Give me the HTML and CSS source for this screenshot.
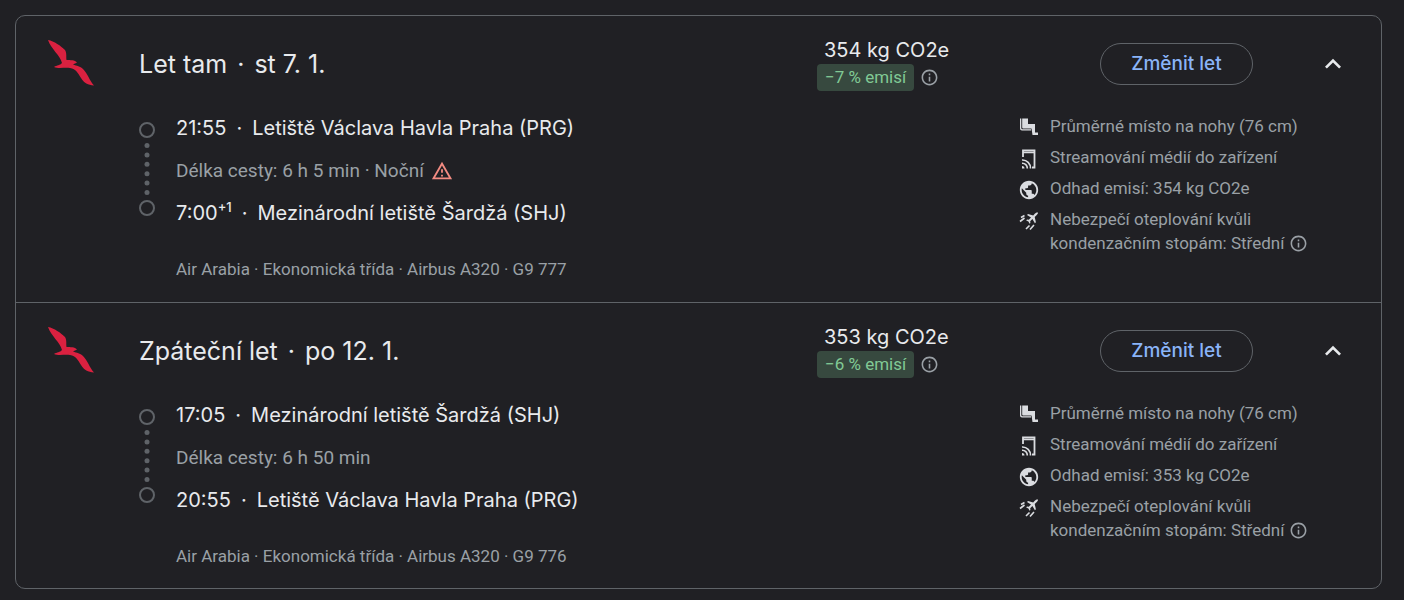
FILE: index.html
```html
<!DOCTYPE html>
<html lang="cs">
<head>
  <meta charset="UTF-8">
  <meta name="viewport" content="width=device-width, initial-scale=1">
  <title>Vybrané lety</title>
  <link rel="stylesheet" href="styles.css">
</head>
<body>
  <!-- shared icons -->
  <svg class="sprite" aria-hidden="true">
    <symbol id="bird" viewBox="0 0 46 46">
      <path d="M0 0C6 1 13 6 17 10C19 13 18 17 18.500 20C22 20 27 20 29 22.500C28 23.500 26 23.500 25 24.500C29 26 32 26 35 29C40 34 41 40 46 45.500C40 45 36 43 33 38C30 33 28 29 22 28C17 27 11 29 6 27C9 25 12 25.500 14 23C12 15 3 9 0 0z"/>
    </symbol>
    <symbol id="info" viewBox="0 0 24 24">
      <path d="M11 17h2v-6h-2v6zm1-15C6.480 2 2 6.480 2 12s4.480 10 10 10 10-4.480 10-10S17.520 2 12 2zm0 18c-4.410 0-8-3.590-8-8s3.590-8 8-8 8 3.590 8 8-3.590 8-8 8zM11 9h2V7h-2v2z"/>
    </symbol>
    <symbol id="warning" viewBox="0 0 24 24">
      <path d="M12 5.990L19.530 19H4.470L12 5.990M12 2L1 21h22L12 2zm1 14h-2v2h2v-2zm0-6h-2v4h2v-4z"/>
    </symbol>
    <symbol id="up" viewBox="0 0 24 24">
      <path d="M12 8l-6 6 1.410 1.410L12 10.830l4.590 4.580L18 14z"/>
    </symbol>
    <symbol id="route" viewBox="0 0 16 94">
      <circle cx="8" cy="8" r="7" fill="none" stroke="currentColor" stroke-width="2"/>
      <circle cx="8" cy="23.500" r="2.500"/>
      <circle cx="8" cy="33" r="2.500"/>
      <circle cx="8" cy="42.300" r="2.500"/>
      <circle cx="8" cy="51.700" r="2.500"/>
      <circle cx="8" cy="61" r="2.500"/>
      <circle cx="8" cy="70.500" r="2.500"/>
      <circle cx="8" cy="86" r="7" fill="none" stroke="currentColor" stroke-width="2"/>
    </symbol>
    <symbol id="seat" viewBox="0 0 20 20">
      <path d="M1 0.500h1.300V10q0 1.200 1.200 1.200H12v1.300H3Q1 12.500 1 10.500z"/>
      <path d="M3.200 0.500H9V6h7v8.500h3V17h-5.500l-1-6.500H4.200q-1 0-1-1z"/>
    </symbol>
    <symbol id="stream" viewBox="0 0 20 20">
      <g fill="none" stroke="currentColor">
        <path stroke-width="1.800" d="M4 8V1.500h11.500V18.500H13"/>
        <path stroke-width="1.600" d="M4 3.500h11.500M3 11a8 8 0 0 1 8.500 8.500M3 14.200a5 5 0 0 1 5.300 5.300"/>
      </g>
      <path d="M3 17a2.500 2.500 0 0 1 2.500 2.500H3z"/>
    </symbol>
    <symbol id="globe" viewBox="0 0 24 24">
      <path d="M12 1C5.930 1 1 5.930 1 12s4.930 11 11 11 11-4.930 11-11S18.070 1 12 1zm-1.100 19.720c-4.350-.540-7.700-4.230-7.700-8.720 0-.680.090-1.330.230-1.970L8.700 15.300v1.100c0 1.210.990 2.200 2.200 2.200v2.120zm7.590-2.790c-.290-.890-1.100-1.530-2.090-1.530h-1.100v-3.300c0-.600-.500-1.100-1.100-1.100H7.600V9.800h2.200c.600 0 1.100-.500 1.100-1.100V6.500h2.200c1.210 0 2.200-.990 2.200-2.200v-.450c3.220 1.310 5.500 4.460 5.500 8.150 0 2.290-.880 4.360-2.310 5.930z"/>
    </symbol>
    <symbol id="contrail" viewBox="0 0 20 20">
      <path d="M19 1.500c-1.200-.3-2.300.400-3 1.100L14.200 4.400 9 3 8 4l4 2.600-2.200 2.200-1.800-.200-.8.800 2.200 1.200 1.200 2.200.8-.8-.200-1.800 2.200-2.200 2.500 4.200 1-1L15.700 6l1.800-1.800c.800-.8 1.600-1.600 1.500-2.700z"/>
      <path fill="none" stroke="currentColor" stroke-width="1.600" d="M2 6.500l3.500-2M1 10.500l4.500-3.500M7 18l3.500-3.500M11 18.500l4-4.500"/>
    </symbol>
  </svg>

  <main class="flights">
    <section class="flight">
      <header class="flight-header">
        <svg class="logo"><use href="#bird"/></svg>
        <h2 class="title">Let tam<span class="dot">·</span>st 7. 1.</h2>
        <div class="emissions">
          <div class="amount">354 kg CO2e</div>
          <div class="compare">
            <span class="badge">−7 % emisí</span>
            <svg class="info"><use href="#info"/></svg>
          </div>
        </div>
        <button class="change" type="button">Změnit let</button>
        <button class="toggle" type="button" aria-label="Sbalit"><svg><use href="#up"/></svg></button>
      </header>
      <div class="flight-body">
        <svg class="route"><use href="#route"/></svg>
        <div class="legs">
          <div class="stop">21:55<span class="dot">·</span>Letiště Václava Havla Praha (PRG)</div>
          <div class="duration">Délka cesty: 6 h 5 min · Noční <svg class="warning"><use href="#warning"/></svg></div>
          <div class="stop">7:00<sup>+1</sup><span class="dot">·</span>Mezinárodní letiště Šardžá (SHJ)</div>
          <div class="plane">Air Arabia · Ekonomická třída · Airbus A320 · G9 777</div>
        </div>
        <ul class="amenities">
          <li><svg><use href="#seat"/></svg><span>Průměrné místo na nohy (76 cm)</span></li>
          <li><svg><use href="#stream"/></svg><span>Streamování médií do zařízení</span></li>
          <li><svg><use href="#globe"/></svg><span>Odhad emisí: 354 kg CO2e</span></li>
          <li><svg><use href="#contrail"/></svg><span>Nebezpečí oteplování kvůli<br>kondenzačním stopám: Střední <svg class="info"><use href="#info"/></svg></span></li>
        </ul>
      </div>
    </section>

    <section class="flight">
      <header class="flight-header">
        <svg class="logo"><use href="#bird"/></svg>
        <h2 class="title">Zpáteční let<span class="dot">·</span>po 12. 1.</h2>
        <div class="emissions">
          <div class="amount">353 kg CO2e</div>
          <div class="compare">
            <span class="badge">−6 % emisí</span>
            <svg class="info"><use href="#info"/></svg>
          </div>
        </div>
        <button class="change" type="button">Změnit let</button>
        <button class="toggle" type="button" aria-label="Sbalit"><svg><use href="#up"/></svg></button>
      </header>
      <div class="flight-body">
        <svg class="route"><use href="#route"/></svg>
        <div class="legs">
          <div class="stop">17:05<span class="dot">·</span>Mezinárodní letiště Šardžá (SHJ)</div>
          <div class="duration">Délka cesty: 6 h 50 min</div>
          <div class="stop">20:55<span class="dot">·</span>Letiště Václava Havla Praha (PRG)</div>
          <div class="plane">Air Arabia · Ekonomická třída · Airbus A320 · G9 776</div>
        </div>
        <ul class="amenities">
          <li><svg><use href="#seat"/></svg><span>Průměrné místo na nohy (76 cm)</span></li>
          <li><svg><use href="#stream"/></svg><span>Streamování médií do zařízení</span></li>
          <li><svg><use href="#globe"/></svg><span>Odhad emisí: 353 kg CO2e</span></li>
          <li><svg><use href="#contrail"/></svg><span>Nebezpečí oteplování kvůli<br>kondenzačním stopám: Střední <svg class="info"><use href="#info"/></svg></span></li>
        </ul>
      </div>
    </section>
  </main>
</body>
</html>
```
FILE: styles.css
```css
* {
  box-sizing: border-box;
}
body {
  margin: 0;
  padding: 15px 22px 11px 15px;
  background: #202024;
  color: #e8eaed;
  font-family: Roboto, sans-serif;
}
svg {
  display: block;
  flex: none;
  fill: currentColor;
}
.sprite {
  position: absolute;
  width: 0;
  height: 0;
}
.flights {
  border: 1px solid #5f6368;
  border-radius: 10px;
}
.flight {
  padding: 21px 32px 21px 32px;
}
.flight + .flight {
  padding-bottom: 20px;
  border-top: 1px solid #5f6368;
}
.flight-header {
  display: flex;
  align-items: center;
}
.logo {
  width: 46px;
  height: 46px;
  margin: 0 45px 3px 0;
  color: #da2140;
}
.title {
  flex: 1;
  margin: 0;
  font: 400 25px/32px Inter, sans-serif;
}
.dot {
  margin: 0 10px;
}
.emissions {
  width: 283px;
}
.amount {
  padding-left: 7px;
  font: 400 20px/27px Inter, sans-serif;
}
.compare {
  display: flex;
  align-items: center;
  gap: 6px;
}
.badge {
  padding: 0 8px;
  border-radius: 4px;
  background: #37493f;
  color: #81c995;
  font-size: 17px;
  line-height: 27px;
}
.info {
  width: 19px;
  height: 19px;
  color: #9aa0a6;
}
.change {
  width: 153px;
  height: 42px;
  border: 1px solid #5f6368;
  border-radius: 21px;
  background: none;
  color: #8ab4f8;
  font: 500 19px/24px Inter, sans-serif;
}
.toggle {
  margin-left: 64px;
  padding: 0;
  border: none;
  background: none;
  color: #e8eaed;
}
.toggle svg {
  width: 32px;
  height: 32px;
}
.flight-body {
  display: flex;
  margin: 23px 0 0 91px;
}
.route {
  width: 16px;
  height: 94px;
  margin: 8px 21px 0 0;
  color: #5f6368;
}
.legs {
  flex: 1;
}
.stop {
  font: 400 20px/28px Inter, sans-serif;
}
.stop sup {
  font-size: 13px;
  font-weight: 500;
  line-height: 0;
}
.duration {
  display: flex;
  align-items: center;
  gap: 7px;
  margin: 15px 0 14px;
  color: #9aa0a6;
  font-size: 19px;
  line-height: 28px;
}
.warning {
  width: 22px;
  height: 22px;
  color: #f28b82;
}
.plane {
  margin-top: 30px;
  color: #9aa0a6;
  font-size: 17px;
  line-height: 24px;
}
.amenities {
  display: flex;
  flex-direction: column;
  gap: 7px;
  width: 330px;
  margin: 0;
  padding: 0;
  list-style: none;
  color: #9aa0a6;
  font-size: 17px;
  line-height: 24px;
}
.amenities li {
  display: flex;
  gap: 11px;
}
.amenities li > svg {
  width: 20px;
  height: 20px;
  margin-top: 4px;
  color: #dadce0;
}
.amenities .info {
  display: inline-block;
  vertical-align: -4px;
}
```
